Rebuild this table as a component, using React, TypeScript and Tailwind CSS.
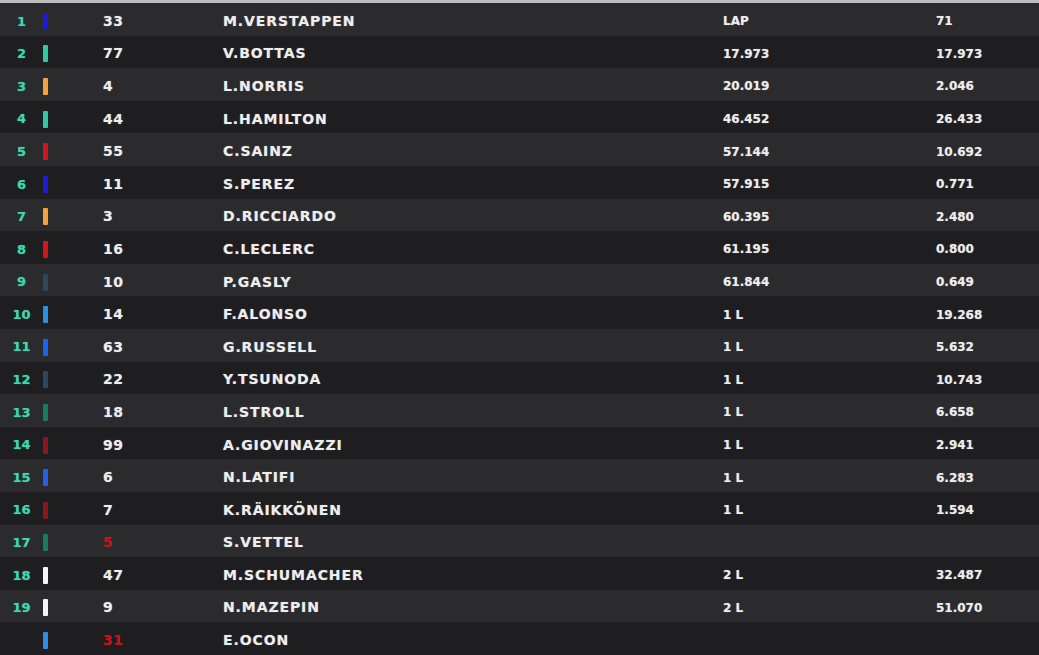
import React from "react";

type Row = {
  pos: string;
  team: string;
  num: string;
  out?: boolean;
  name: string;
  gap: string;
  int: string;
};

const rows: Row[] = [
  { pos: "1", team: "bg-[#1a1ad8]", num: "33", name: "M.VERSTAPPEN", gap: "LAP", int: "71" },
  { pos: "2", team: "bg-[#2fc9a3]", num: "77", name: "V.BOTTAS", gap: "17.973", int: "17.973" },
  { pos: "3", team: "bg-[#f2a33a]", num: "4", name: "L.NORRIS", gap: "20.019", int: "2.046" },
  { pos: "4", team: "bg-[#2fc9a3]", num: "44", name: "L.HAMILTON", gap: "46.452", int: "26.433" },
  { pos: "5", team: "bg-[#d3141c]", num: "55", name: "C.SAINZ", gap: "57.144", int: "10.692" },
  { pos: "6", team: "bg-[#1a1ad8]", num: "11", name: "S.PEREZ", gap: "57.915", int: "0.771" },
  { pos: "7", team: "bg-[#f2a33a]", num: "3", name: "D.RICCIARDO", gap: "60.395", int: "2.480" },
  { pos: "8", team: "bg-[#d3141c]", num: "16", name: "C.LECLERC", gap: "61.195", int: "0.800" },
  { pos: "9", team: "bg-[#2f4660]", num: "10", name: "P.GASLY", gap: "61.844", int: "0.649" },
  { pos: "10", team: "bg-[#2b8fe6]", num: "14", name: "F.ALONSO", gap: "1 L", int: "19.268" },
  { pos: "11", team: "bg-[#1c62ee]", num: "63", name: "G.RUSSELL", gap: "1 L", int: "5.632" },
  { pos: "12", team: "bg-[#2f4660]", num: "22", name: "Y.TSUNODA", gap: "1 L", int: "10.743" },
  { pos: "13", team: "bg-[#197c5c]", num: "18", name: "L.STROLL", gap: "1 L", int: "6.658" },
  { pos: "14", team: "bg-[#8a1620]", num: "99", name: "A.GIOVINAZZI", gap: "1 L", int: "2.941" },
  { pos: "15", team: "bg-[#1c62ee]", num: "6", name: "N.LATIFI", gap: "1 L", int: "6.283" },
  { pos: "16", team: "bg-[#8a1620]", num: "7", name: "K.RÄIKKÖNEN", gap: "1 L", int: "1.594" },
  { pos: "17", team: "bg-[#197c5c]", num: "5", out: true, name: "S.VETTEL", gap: "", int: "" },
  { pos: "18", team: "bg-[#f4f4f4]", num: "47", name: "M.SCHUMACHER", gap: "2 L", int: "32.487" },
  { pos: "19", team: "bg-[#f4f4f4]", num: "9", name: "N.MAZEPIN", gap: "2 L", int: "51.070" },
  { pos: "", team: "bg-[#2b8fe6]", num: "31", out: true, name: "E.OCON", gap: "", int: "" },
];

const App = () => {
  return (
    <div className="w-[1039px] h-[655px] flex flex-col bg-[#1e1e21] font-['DejaVu_Sans',sans-serif] font-bold text-[#ededed] overflow-hidden [text-shadow:0_0_1px_rgba(255,255,255,0.45)]">
      <div className="h-[3px] bg-[#bdbdbd]" />
      <div className="flex-1 flex flex-col">
        {rows.map((r, i) => (
          <div
            key={r.name}
            className={
              "flex-1 flex items-center pt-[4px] " +
              (i % 2 === 0 ? "bg-[#2b2b2e]" : "bg-[#1e1e21]")
            }
          >
            <div className="w-[43px] text-center text-[13px] text-[#3fd6b2] [text-shadow:0_0_1px_rgba(63,214,178,0.6)]">
              {r.pos}
            </div>
            <div className={"w-[5px] h-[17px] rounded-[1px] " + r.team} />
            <div
              className={
                "ml-[55px] w-[120px] text-[14px] tracking-[0.5px] " +
                (r.out ? "text-[#c4141c] [text-shadow:0_0_1px_rgba(196,20,28,0.6)]" : "")
              }
            >
              {r.num}
            </div>
            <div className="w-[500px] text-[14px] tracking-[0.9px]">{r.name}</div>
            <div className="w-[213px] text-[12px]">{r.gap}</div>
            <div className="text-[12px]">{r.int}</div>
          </div>
        ))}
      </div>
    </div>
  );
};

export default App;
